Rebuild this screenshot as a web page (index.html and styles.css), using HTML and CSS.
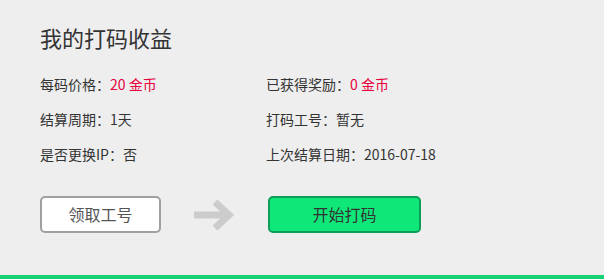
FILE: index.html
```html
<!DOCTYPE html>
<html lang="zh-CN">
<head>
<meta charset="utf-8">
<title>我的打码收益</title>
<link rel="stylesheet" href="styles.css">
</head>
<body>
<div class="page">
  <div class="content">
    <h1 class="title">我的打码收益</h1>
    <div class="info">
      <div class="item">每码价格：<span class="red">20 金币</span></div>
      <div class="item">已获得奖励：<span class="red">0 金币</span></div>
      <div class="item">结算周期：1天</div>
      <div class="item">打码工号：暂无</div>
      <div class="item">是否更换IP：否</div>
      <div class="item">上次结算日期：2016-07-18</div>
    </div>
    <div class="actions">
      <button class="btn btn-get">领取工号</button>
      <svg class="arrow" width="42" height="30" viewBox="0 0 42 30">
        <line x1="0" y1="15" x2="37" y2="15" stroke="#cccccc" stroke-width="7"/>
        <polyline points="21,2 35,15 21,28" fill="none" stroke="#cccccc" stroke-width="7"/>
      </svg>
      <button class="btn btn-start">开始打码</button>
    </div>
  </div>
  <div class="bar"></div>
</div>
</body>
</html>
```
FILE: styles.css
```css
html, body {
  margin: 0;
  padding: 0;
  background: #eeeeee;
}
body {
  font-family: "Noto Sans CJK SC", "Noto Sans", sans-serif;
  color: #333333;
}
.page {
  height: 279px;
  display: flex;
  flex-direction: column;
  overflow: hidden;
}
.content {
  padding: 22px 0 0 40px;
  flex: 1;
}
.title {
  margin: 0;
  font-size: 22px;
  font-weight: normal;
  line-height: 30px;
  color: #333333;
}
.info {
  margin-top: 15px;
  display: grid;
  grid-template-columns: 226px auto;
  grid-auto-rows: 35px;
  font-size: 14px;
  line-height: 35px;
}
.item {
  white-space: nowrap;
}
.red {
  color: #e6003c;
}
.actions {
  margin-top: 24px;
  display: flex;
  align-items: center;
}
.btn {
  font-family: "Noto Sans CJK SC", "Noto Sans", sans-serif;
  font-size: 16px;
  height: 37px;
  border-radius: 5px;
  border: 2px solid #a0a0a0;
  padding: 0;
  cursor: pointer;
  line-height: 33px;
}
.btn-get {
  width: 121px;
  background: #ffffff;
  color: #555555;
}
.arrow {
  display: block;
  margin: 0 32px 0 33px;
}
.btn-start {
  width: 153px;
  background: #0fe879;
  border-color: #0e9c58;
  color: #333333;
}
.bar {
  height: 4px;
  background: #16d273;
}
```
